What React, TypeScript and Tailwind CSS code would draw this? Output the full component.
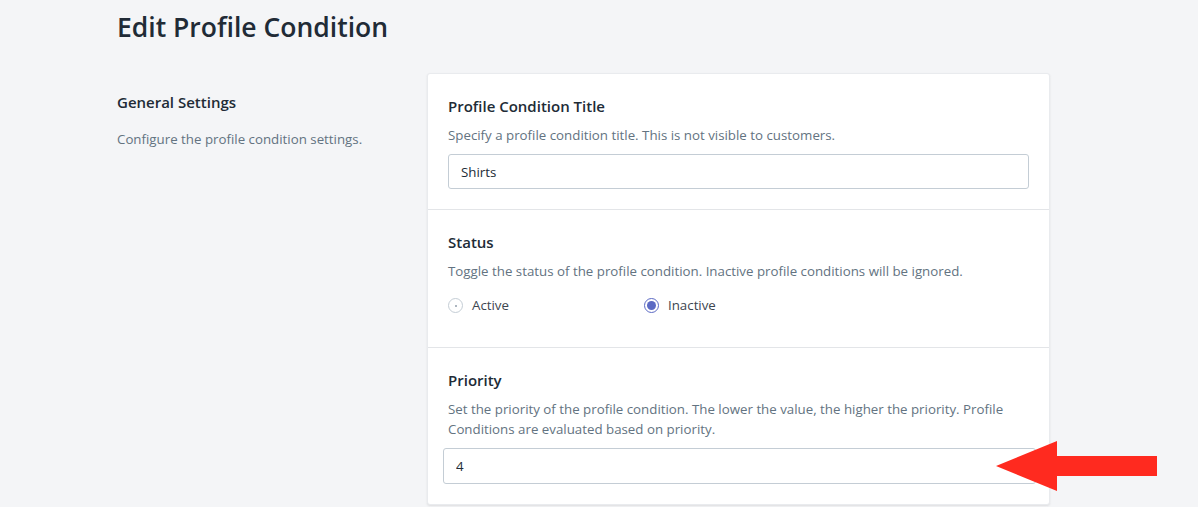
import React from 'react'

function Section({ title, desc, children, last }: { title: string; desc: React.ReactNode; children: React.ReactNode; last?: boolean }) {
  return (
    <div className={last ? 'px-5 pt-[21px] pb-5' : 'px-5 pt-[21px] pb-5 border-b border-[#e3e5e8]'}>
      <h3 className="text-[15px] leading-[22px] font-semibold text-[#212b36]">{title}</h3>
      <p className="mt-[8px] text-[13.3px] leading-[20px] text-[#637381]">{desc}</p>
      <div className="mt-[9px]">{children}</div>
    </div>
  )
}

function Radio({ label, checked }: { label: string; checked?: boolean }) {
  return (
    <label className="flex items-center gap-[9px] text-[13.3px] text-[#3d4650] cursor-pointer">
      {checked ? (
        <span className="w-[15px] h-[15px] rounded-full border border-[#5c6ac4] bg-white flex items-center justify-center">
          <span className="w-[9px] h-[9px] rounded-full bg-[#5c6ac4]" />
        </span>
      ) : (
        <span className="w-[15px] h-[15px] rounded-full border border-[#c4cdd5] bg-white flex items-center justify-center">
          <span className="w-[2px] h-[2px] rounded-full bg-[#919eab]" />
        </span>
      )}
      {label}
    </label>
  )
}

export default function App() {
  return (
    <div className="min-h-[507px] bg-[#f4f5f7] font-['Open_Sans',sans-serif] relative overflow-hidden">
      <div className="pl-[117px] pt-[8px]">
        <h1 className="text-[26.5px] leading-[38px] font-semibold text-[#212b36]">Edit Profile Condition</h1>

        <div className="flex mt-[27px]">
          <div className="w-[310px] pt-[18px]">
            <h2 className="text-[15px] leading-[22px] font-semibold text-[#212b36]">General Settings</h2>
            <p className="mt-[16px] text-[13.3px] leading-[20px] text-[#637381]">Configure the profile condition settings.</p>
          </div>

          <div className="w-[623px] bg-white rounded-[3px] border border-[#e9ebee] shadow-[0_1px_2px_rgba(63,63,68,0.12)]">
            <Section title="Profile Condition Title" desc="Specify a profile condition title. This is not visible to customers.">
              <input
                defaultValue="Shirts"
                className="block w-full h-[35px] rounded-[3px] border border-[#c4cdd5] px-3 text-[13.3px] text-[#212b36] outline-none"
              />
            </Section>

            <Section title="Status" desc="Toggle the status of the profile condition. Inactive profile conditions will be ignored.">
              <div className="flex pt-[6px] pb-[11px]">
                <div className="w-[196px]">
                  <Radio label="Active" />
                </div>
                <Radio label="Inactive" checked />
              </div>
            </Section>

            <Section
              last
              title="Priority"
              desc="Set the priority of the profile condition. The lower the value, the higher the priority. Profile Conditions are evaluated based on priority."
            >
              <input
                defaultValue="4"
                className="block w-[593px] -ml-[5px] h-[36px] rounded-[3px] border border-[#c4cdd5] px-3 text-[13.3px] text-[#212b36] outline-none"
              />
            </Section>
          </div>
        </div>
      </div>

      <svg className="absolute left-[996px] top-[441px]" width="162" height="50" viewBox="0 0 162 50">
        <polygon points="0,25 61,0 61,15 161,15 161,35 61,35 61,50" fill="#ff2a1f" />
      </svg>
    </div>
  )
}
